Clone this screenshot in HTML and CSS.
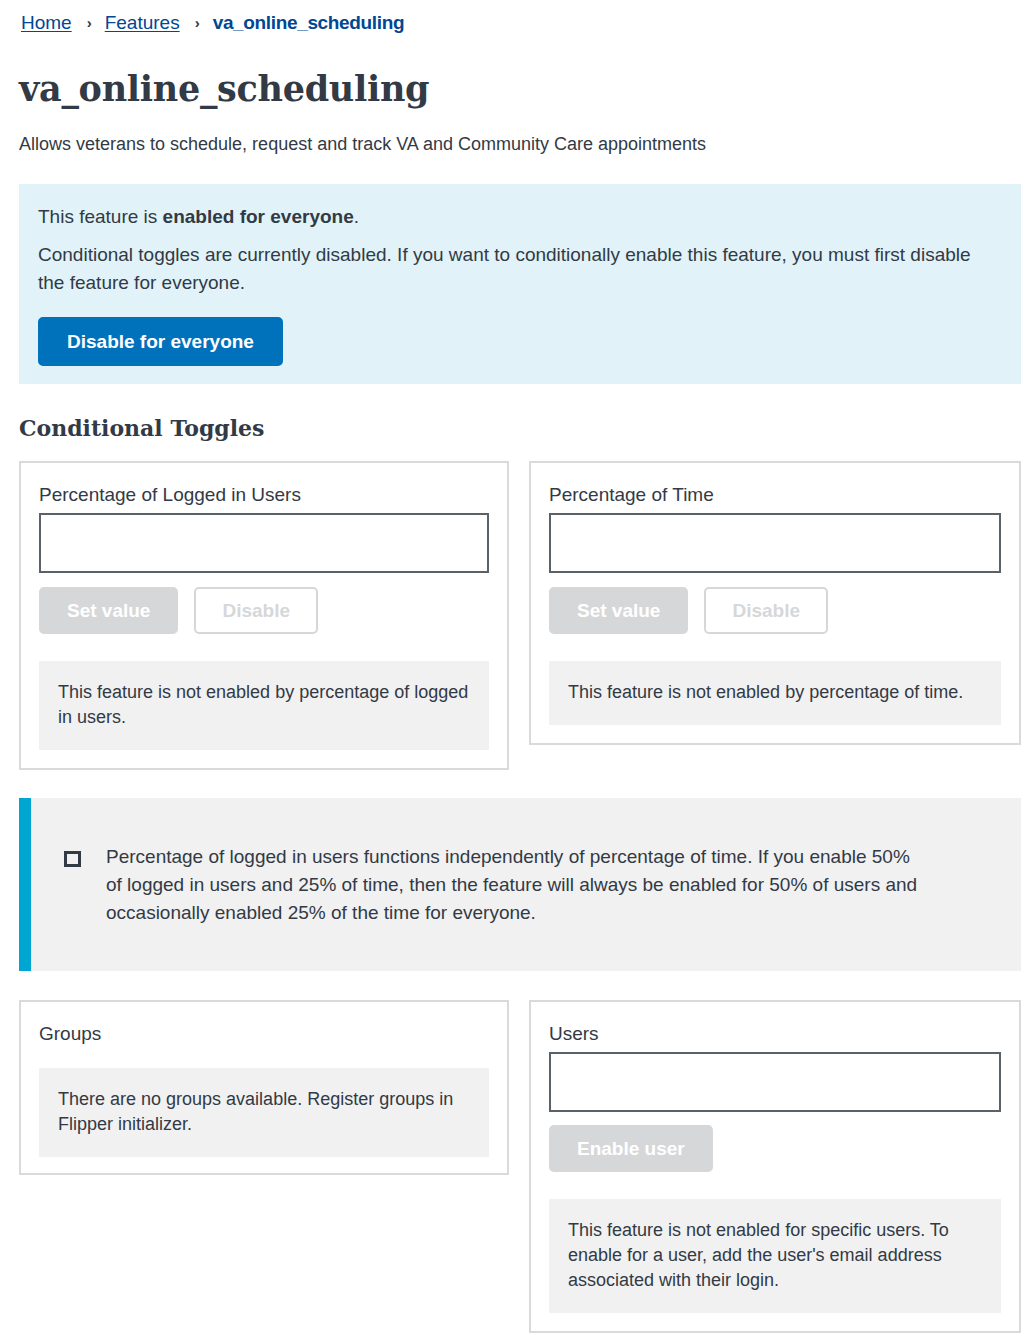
FILE: index.html
```html
<!DOCTYPE html>
<html lang="en">
<head>
<meta charset="utf-8">
<title>va_online_scheduling</title>
<link rel="stylesheet" href="styles.css">
</head>
<body>
<div class="page">
  <nav class="breadcrumbs">
    <a class="crumb-link" href="#">Home</a><span class="crumb-sep">›</span><a class="crumb-link" href="#">Features</a><span class="crumb-sep">›</span><span class="crumb-current">va_online_scheduling</span>
  </nav>

  <h1 class="title">va_online_scheduling</h1>
  <p class="desc">Allows veterans to schedule, request and track VA and Community Care appointments</p>

  <section class="info">
    <p class="info-text">This feature is <strong>enabled for everyone</strong>.</p>
    <p class="info-text">Conditional toggles are currently disabled. If you want to conditionally enable this feature, you must first disable the feature for everyone.</p>
    <button class="btn btn-primary">Disable for everyone</button>
  </section>

  <h2 class="section-title">Conditional Toggles</h2>

  <div class="grid">
    <div class="card">
      <label class="card-label">Percentage of Logged in Users</label>
      <input class="field" type="text">
      <div class="btn-row">
        <button class="btn btn-disabled">Set value</button>
        <button class="btn btn-outline-disabled">Disable</button>
      </div>
      <div class="note">This feature is not enabled by percentage of logged in users.</div>
    </div>
    <div class="card">
      <label class="card-label">Percentage of Time</label>
      <input class="field" type="text">
      <div class="btn-row">
        <button class="btn btn-disabled">Set value</button>
        <button class="btn btn-outline-disabled">Disable</button>
      </div>
      <div class="note">This feature is not enabled by percentage of time.</div>
    </div>
  </div>

  <div class="alert">
    <span class="alert-box" aria-hidden="true"></span>
    <p class="alert-text">Percentage of logged in users functions independently of percentage of time. If you enable 50% of logged in users and 25% of time, then the feature will always be enabled for 50% of users and occasionally enabled 25% of the time for everyone.</p>
  </div>

  <div class="grid grid-bottom">
    <div class="card card-groups">
      <div class="card-label card-label-spaced">Groups</div>
      <div class="note">There are no groups available. Register groups in Flipper initializer.</div>
    </div>
    <div class="card">
      <label class="card-label">Users</label>
      <input class="field" type="text">
      <div class="btn-row btn-row-tight">
        <button class="btn btn-disabled">Enable user</button>
      </div>
      <div class="note">This feature is not enabled for specific users. To enable for a user, add the user's email address associated with their login.</div>
    </div>
  </div>
</div>
</body>
</html>
```

FILE: styles.css
```css
* { box-sizing: border-box; }

html, body {
  margin: 0;
  padding: 0;
  background: #ffffff;
}

body {
  font-family: "Liberation Sans", Arial, sans-serif;
  color: #323a45;
}

.page {
  width: 1002px;
  margin-left: 19px;
  padding-top: 9px;
  padding-bottom: 9px;
}

/* breadcrumbs */
.breadcrumbs {
  font-size: 19px;
  line-height: 28px;
  padding-left: 2px;
  display: flex;
  align-items: center;
}
.crumb-link {
  color: #004795;
  text-decoration: underline;
  text-underline-offset: 2px;
}
.crumb-sep {
  margin: 0 13px 0 15px;
  font-size: 15px;
  font-weight: bold;
  color: #323a45;
}
.crumb-current {
  color: #004795;
  font-weight: bold;
  letter-spacing: -0.35px;
}

/* heading */
.title {
  font-family: "DejaVu Serif", Georgia, serif;
  font-weight: bold;
  font-size: 35px;
  line-height: 48px;
  margin: 28px 0 0 0;
  letter-spacing: -0.3px;
}

.desc {
  font-size: 18px;
  line-height: 26px;
  margin: 18px 0 0 0;
}

/* info box */
.info {
  margin-top: 27px;
  background: #e1f3f8;
  padding: 19px 19px 18px 19px;
}
.info-text {
  font-size: 19px;
  line-height: 28px;
  margin: 0 0 10px 0;
}
.info-text + .btn {
  margin-top: 10px;
}

/* buttons */
.btn {
  font-family: "Liberation Sans", Arial, sans-serif;
  font-weight: bold;
  font-size: 19px;
  line-height: 25px;
  padding: 10px 26px;
  border-radius: 5px;
  border: 2px solid transparent;
  cursor: pointer;
}
.btn-primary {
  background: #0071bb;
  border-color: #0071bb;
  color: #ffffff;
  padding-left: 27px;
  padding-right: 27px;
}
.btn-disabled {
  background: #d6d7d9;
  border-color: #d6d7d9;
  color: #ffffff;
  padding-top: 9px;
  padding-bottom: 9px;
}
.btn-outline-disabled {
  background: #ffffff;
  border-color: #d6d7d9;
  color: #d6d7d9;
  padding-top: 9px;
  padding-bottom: 9px;
}

/* section heading */
.section-title {
  font-family: "DejaVu Serif", Georgia, serif;
  font-weight: bold;
  font-size: 22px;
  line-height: 32px;
  margin: 28px 0 0 0;
}

/* grid of cards */
.grid {
  margin-top: 17px;
  display: grid;
  grid-template-columns: 490px 492px;
  column-gap: 20px;
  align-items: start;
}
.grid-bottom {
  margin-top: 29px;
}

.card {
  border: 2px solid #d9dadc;
  padding: 18px;
  display: flex;
  flex-direction: column;
  align-items: stretch;
}
.card-groups {
  padding-bottom: 16px;
}
.card-label {
  display: block;
  font-size: 19px;
  line-height: 28px;
}
.card-label-spaced {
  margin-bottom: 20px;
}
.field {
  display: block;
  width: 100%;
  height: 60px;
  margin-top: 4px;
  border: 2px solid #5b616b;
  border-radius: 0;
  padding: 0 10px;
  font-size: 18px;
  background: #ffffff;
}
.btn-row {
  margin-top: 14px;
  display: flex;
  gap: 16px;
}
.btn-row-tight {
  margin-top: 13px;
}
.note {
  margin-top: 27px;
  background: #f1f1f1;
  padding: 19px 19px 20px 19px;
  font-size: 18px;
  line-height: 25px;
}
.card-label-spaced + .note {
  margin-top: 0;
}

/* alert */
.alert {
  margin-top: 28px;
  background: #f1f1f1;
  border-left: 12px solid #00a6d2;
  padding: 45px 96px 44px 33px;
  display: flex;
  align-items: flex-start;
}
.alert-box {
  flex: none;
  width: 17px;
  height: 16px;
  border: 3px solid #323a45;
  margin-top: 8px;
  margin-right: 25px;
}
.alert-text {
  margin: 0;
  font-size: 19px;
  line-height: 28px;
}
```
